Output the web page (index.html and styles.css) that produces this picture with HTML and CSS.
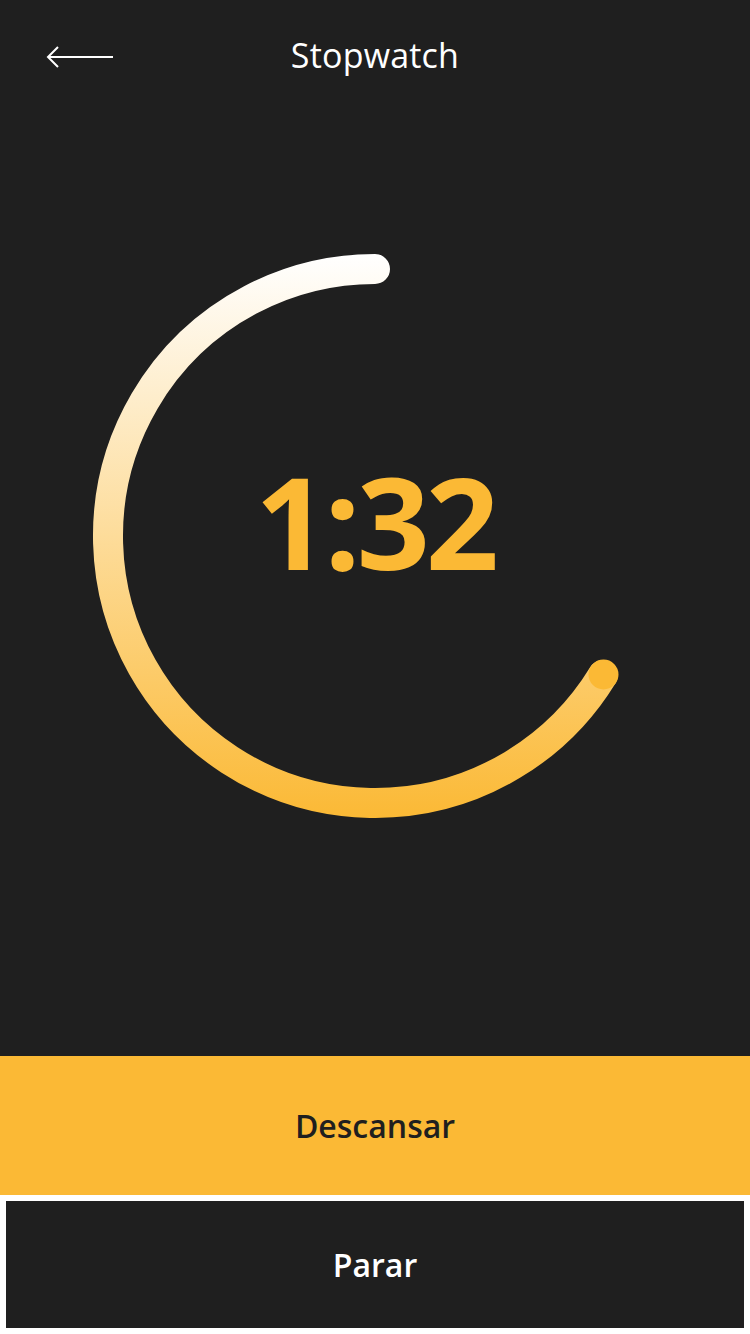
FILE: index.html
```html
<!DOCTYPE html>
<html lang="es">
<head>
<meta charset="utf-8">
<title>Stopwatch</title>
<link rel="stylesheet" href="styles.css">
</head>
<body>
<div class="app">
  <header class="topbar">
    <button class="back" aria-label="Back">
      <svg width="70" height="24" viewBox="0 0 70 24">
        <line x1="3" y1="12" x2="68" y2="12" stroke="#fff" stroke-width="2"/>
        <polyline points="13,2 3,12 13,22" fill="none" stroke="#fff" stroke-width="2"/>
      </svg>
    </button>
    <h1 class="title">Stopwatch</h1>
  </header>
  <main class="dial-area">
    <div class="dial">
      <svg class="ring" width="750" height="944" viewBox="0 112 750 944">
        <defs>
          <linearGradient id="arcGrad" gradientUnits="userSpaceOnUse" x1="0" y1="254" x2="0" y2="818">
            <stop offset="0" stop-color="#ffffff"/>
            <stop offset="1" stop-color="#fbb935"/>
          </linearGradient>
        </defs>
        <path d="M375 269 A267 267 0 1 0 602.9 675.1" fill="none" stroke="url(#arcGrad)" stroke-width="30" stroke-linecap="round"/>
        <circle cx="603.5" cy="674.5" r="15" fill="#fbb935"/>
      </svg>
      <div class="time">1:32</div>
    </div>
  </main>
  <footer class="actions">
    <button class="btn btn-rest">Descansar</button>
    <div class="stop-wrap">
      <button class="btn btn-stop">Parar</button>
    </div>
  </footer>
</div>
</body>
</html>
```
FILE: styles.css
```css
* { box-sizing: border-box; }
html, body {
  margin: 0;
  padding: 0;
  background: #1f1f1f;
}
body {
  font-family: "Open Sans", "Noto Sans", sans-serif;
}
.app {
  width: 750px;
  height: 1334px;
  display: flex;
  flex-direction: column;
  background: #1f1f1f;
}
.topbar {
  height: 112px;
  display: flex;
  align-items: center;
  justify-content: center;
  position: relative;
}
.back {
  position: absolute;
  left: 45px;
  top: 45px;
  background: none;
  border: 0;
  padding: 0;
  width: 70px;
  height: 24px;
  display: block;
}
.back svg { display: block; }
.title {
  margin: 0;
  margin-top: -2px;
  color: #ffffff;
  font-weight: 400;
  font-size: 34px;
  letter-spacing: 0.2px;
}
.dial-area {
  flex: 1;
  display: flex;
}
.dial {
  display: grid;
  width: 750px;
  height: 944px;
}
.ring {
  grid-area: 1 / 1;
  display: block;
}
.time {
  grid-area: 1 / 1;
  align-self: start;
  justify-self: center;
  margin-top: 345px;
  color: #fbb935;
  font-weight: 700;
  font-size: 128px;
  line-height: 1;
  letter-spacing: -4px;
}
.actions {
  display: flex;
  flex-direction: column;
  background: #ffffff;
}
.btn {
  border: 0;
  font-family: "Open Sans", "Noto Sans", sans-serif;
  font-weight: 600;
  font-size: 32px;
  display: flex;
  align-items: center;
  justify-content: center;
  width: 100%;
}
.btn-rest {
  height: 139px;
  background: #fbb935;
  color: #1f1f1f;
}
.stop-wrap {
  padding: 6px;
}
.btn-stop {
  height: 127px;
  background: #1f1f1f;
  color: #ffffff;
}
```
